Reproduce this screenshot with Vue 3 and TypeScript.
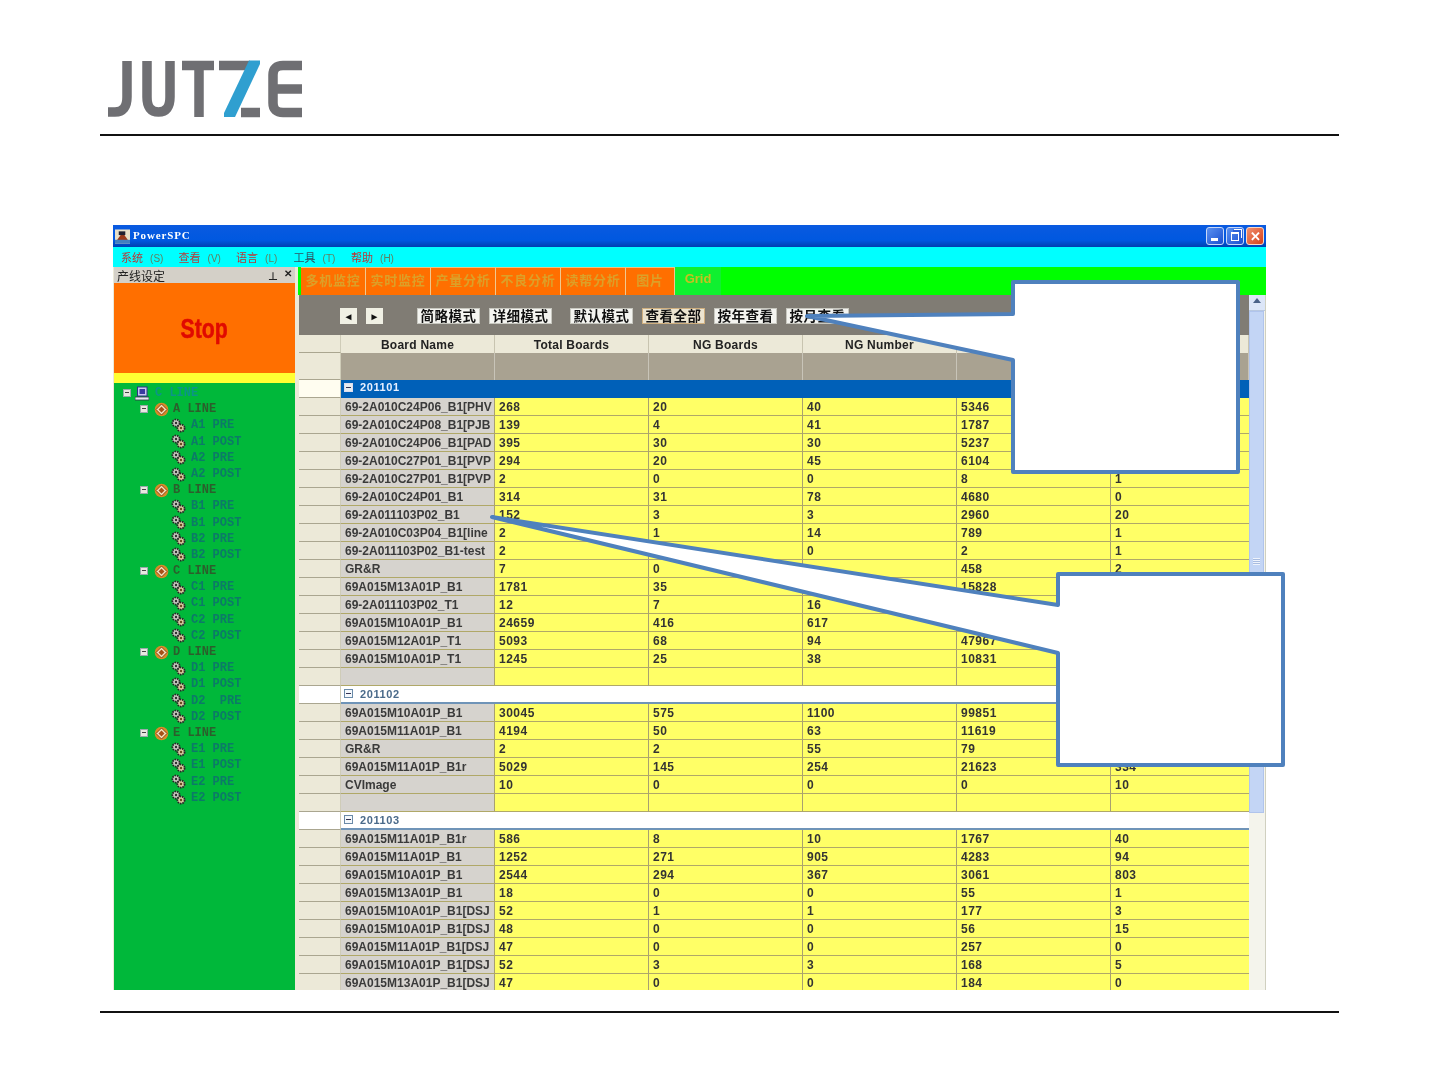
<script setup lang="ts">
interface TreeItem { label: string; level: 0 | 1 | 2 }
interface Group { name: string; open: boolean; rows: string[][] }

const menus = [
  { t: '系统', k: '(S)', c: 'red' },
  { t: '查看', k: '(V)', c: 'red' },
  { t: '语言', k: '(L)', c: 'red' },
  { t: '工具', k: '(T)', c: 'dark' },
  { t: '帮助', k: '(H)', c: 'red' },
]
const tabs = ['多机监控', '实时监控', '产量分析', '不良分析', '读帮分析', '图片']
const buttons = [
  { t: '简略模式', cls: '' },
  { t: '详细模式', cls: '' },
  { t: '默认模式', cls: 'sep' },
  { t: '查看全部', cls: 'active' },
  { t: '按年查看', cls: '' },
  { t: '按月查看', cls: '' },
]
const tree: TreeItem[] = [{ label: 'C LINE', level: 0 }]
for (const l of ['A', 'B', 'C', 'D', 'E']) {
  tree.push({ label: `${l} LINE`, level: 1 })
  tree.push({ label: `${l}1 PRE`, level: 2 })
  tree.push({ label: `${l}1 POST`, level: 2 })
  tree.push({ label: l === 'D' ? 'D2  PRE' : `${l}2 PRE`, level: 2 })
  tree.push({ label: `${l}2 POST`, level: 2 })
}
const groups: Group[] = [
  {
    name: '201101', open: true, rows: [
      ['69-2A010C24P06_B1[PHV', '268', '20', '40', '5346', ''],
      ['69-2A010C24P08_B1[PJB', '139', '4', '41', '1787', ''],
      ['69-2A010C24P06_B1[PAD', '395', '30', '30', '5237', ''],
      ['69-2A010C27P01_B1[PVP', '294', '20', '45', '6104', ''],
      ['69-2A010C27P01_B1[PVP', '2', '0', '0', '8', '1'],
      ['69-2A010C24P01_B1', '314', '31', '78', '4680', '0'],
      ['69-2A011103P02_B1', '152', '3', '3', '2960', '20'],
      ['69-2A010C03P04_B1[line', '2', '1', '14', '789', '1'],
      ['69-2A011103P02_B1-test', '2', '0', '0', '2', '1'],
      ['GR&R', '7', '0', '', '458', '2'],
      ['69A015M13A01P_B1', '1781', '35', '', '15828', ''],
      ['69-2A011103P02_T1', '12', '7', '16', '', ''],
      ['69A015M10A01P_B1', '24659', '416', '617', '', ''],
      ['69A015M12A01P_T1', '5093', '68', '94', '47967', ''],
      ['69A015M10A01P_T1', '1245', '25', '38', '10831', ''],
      ['', '', '', '', '', ''],
    ],
  },
  {
    name: '201102', open: false, rows: [
      ['69A015M10A01P_B1', '30045', '575', '1100', '99851', ''],
      ['69A015M11A01P_B1', '4194', '50', '63', '11619', ''],
      ['GR&R', '2', '2', '55', '79', ''],
      ['69A015M11A01P_B1r', '5029', '145', '254', '21623', '334'],
      ['CVImage', '10', '0', '0', '0', '10'],
      ['', '', '', '', '', ''],
    ],
  },
  {
    name: '201103', open: false, rows: [
      ['69A015M11A01P_B1r', '586', '8', '10', '1767', '40'],
      ['69A015M11A01P_B1', '1252', '271', '905', '4283', '94'],
      ['69A015M10A01P_B1', '2544', '294', '367', '3061', '803'],
      ['69A015M13A01P_B1', '18', '0', '0', '55', '1'],
      ['69A015M10A01P_B1[DSJ', '52', '1', '1', '177', '3'],
      ['69A015M10A01P_B1[DSJ', '48', '0', '0', '56', '15'],
      ['69A015M11A01P_B1[DSJ', '47', '0', '0', '257', '0'],
      ['69A015M10A01P_B1[DSJ', '52', '3', '3', '168', '5'],
      ['69A015M13A01P_B1[DSJ', '47', '0', '0', '184', '0'],
    ],
  },
]
const heads = ['Board Name', 'Total Boards', 'NG Boards', 'NG Number', '', '']
</script>

<template>
  <div class="page">
    <header class="logo-row">
      <svg class="logo" width="200" height="60" viewBox="0 0 200 60" role="img" aria-label="JUTZE">
        <g fill="none" stroke="#6f6f73" stroke-width="9.5">
          <path d="M19 2V38Q19 53 7 53H0" />
          <path d="M39 2V38Q39 53 50.500 53Q62 53 62 38V2" />
          <path d="M74 6.500H106M91 2V58" />
          <path d="M111 6.500H142M133 53.500H152" />
          <path d="M194 6.500H175Q165 6.500 165 16V44Q165 53.500 175 53.500H194M165 30H194" />
        </g>
        <path d="M141 1.500H152V5L127 58H116V54Z" fill="#2f9fd0" />
      </svg>
    </header>
    <div class="rule"></div>

    <section class="window">
      <div class="titlebar">
        <svg class="app-icon" width="15" height="15" viewBox="0 0 16 15">
          <rect width="16" height="15" fill="#e8e0c8" />
          <path d="M1 13L8 3L15 13Z" fill="#9a3a1a" />
          <path d="M4 2H11V6H4Z" fill="#202030" />
          <path d="M0 11H16V15H0Z" fill="#4080c0" />
        </svg>
        <span class="app-title">PowerSPC</span>
        <div class="win-btns">
          <span class="wbtn"><i class="min"></i></span>
          <span class="wbtn"><i class="max"></i></span>
          <span class="wbtn close">✕</span>
        </div>
      </div>
      <nav class="menubar">
        <span v-for="m in menus" :key="m.t" class="menu" :class="m.c">{{ m.t }} <em>{{ m.k }}</em></span>
      </nav>

      <div class="body">
        <aside class="side">
          <div class="side-title">
            <span>产线设定</span>
            <span class="side-tools"><b>⊥</b><b>✕</b></span>
          </div>
          <div class="stop"><span>Stop</span></div>
          <div class="stripe"></div>
          <ul class="tree">
            <li v-for="(n, i) in tree" :key="i" class="node" :class="`lv${n.level}`">
              <span v-if="n.level < 2" class="tog"></span>
              <svg v-if="n.level === 0" class="ico" width="14" height="15" viewBox="0 0 14 15">
                <rect x="2.500" y="1" width="9.500" height="9" fill="#c8c8f0" stroke="#30308a" />
                <rect x="4.500" y="3" width="5.500" height="5" fill="#3a3aa0" />
                <rect x="0" y="11" width="14" height="3" fill="#e8e8f0" stroke="#30304a" stroke-width=".8" />
              </svg>
              <svg v-else-if="n.level === 1" class="ico" width="15" height="15" viewBox="0 0 15 15">
                <circle cx="7.500" cy="7.500" r="6.800" fill="#d88a28" />
                <path d="M7.500 2L13 7.500L7.500 13L2 7.500Z" fill="#f4e4c0" stroke="#8a4414" />
                <path d="M7.500 4.500L10.500 7.500L7.500 10.500L4.500 7.500Z" fill="#a85018" />
              </svg>
              <svg v-else class="ico" width="15" height="15" viewBox="0 0 15 15">
                <circle cx="5" cy="5" r="3.600" fill="#c8c8c0" stroke="#282828" stroke-width="1.800" stroke-dasharray="1.600 .9" />
                <circle cx="10" cy="10" r="3.600" fill="#d8c8a0" stroke="#282828" stroke-width="1.800" stroke-dasharray="1.600 .9" />
                <circle cx="5" cy="5" r="1.200" fill="#303030" />
                <circle cx="10" cy="10" r="1.200" fill="#6a4a20" />
              </svg>
              <span class="lab">{{ n.label }}</span>
            </li>
          </ul>
        </aside>

        <main class="main">
          <div class="tabs">
            <span v-for="t in tabs" :key="t" class="tab" :class="{ narrow: t === '图片' }">{{ t }}</span>
            <span class="tab grid">Grid</span>
          </div>
          <div class="content">
            <div class="grid-area">
              <div class="toolbar">
                <span class="arrow">◄</span>
                <span class="arrow">►</span>
                <span class="tbtns">
                  <span v-for="b in buttons" :key="b.t" class="tbtn" :class="b.cls">{{ b.t }}</span>
                </span>
              </div>
              <div class="row head">
                <span class="rh"></span>
                <span v-for="(h, i) in heads" :key="i" class="hc">{{ h }}</span>
              </div>
              <div class="row filter">
                <span class="rh"></span>
                <span v-for="i in 6" :key="i" class="fc"></span>
              </div>
              <template v-for="g in groups" :key="g.name">
                <div class="row group" :class="{ open: g.open }">
                  <span class="rh"></span>
                  <span class="gname"><i class="box"></i>{{ g.name }}</span>
                </div>
                <div v-for="(r, ri) in g.rows" :key="ri" class="row data">
                  <span class="rh"></span>
                  <span v-for="(c, ci) in r" :key="ci" class="cell" :class="{ name: ci === 0 }">{{ c }}</span>
                </div>
              </template>
            </div>
            <div class="scrollbar">
              <span class="up"><i></i></span>
              <span class="thumb"><i></i></span>
            </div>
          </div>
        </main>
      </div>
    </section>

    <div class="rule bottom"></div>

    <svg class="callouts" width="1440" height="1080" viewBox="0 0 1440 1080" aria-hidden="true">
      <path d="M1013 282H1238V472H1013V360L807 316L1013 314Z" fill="#fff" stroke="#4f81bd" stroke-width="4" stroke-linejoin="round" />
      <path d="M1058 574H1283V765H1058V653L492 517L1058 605Z" fill="#fff" stroke="#4f81bd" stroke-width="4" stroke-linejoin="round" />
    </svg>
  </div>
</template>

<style>
html, body { margin: 0; background: #fff; }
</style>

<style scoped>
.page {
  position: relative;
  width: 1440px;
  height: 1080px;
  padding: 0 101px 0 100px;
  box-sizing: border-box;
  overflow: hidden;
  background: #fff;
  font-family: "Liberation Sans", "Noto Sans CJK SC", sans-serif;
}
.logo-row { height: 134px; padding: 59px 0 0 8px; box-sizing: border-box; }
.logo { display: block; filter: blur(.6px); }
.rule { height: 2px; background: #111; }
.rule.bottom { margin-top: 21px; }

.window {
  margin: 89px 0 0 13px;
  width: 1153px;
  height: 765px;
  display: flex;
  flex-direction: column;
  overflow: hidden;
  background: #ece9d8;
  filter: blur(.45px);
}
.titlebar {
  height: 22px;
  flex: none;
  display: flex;
  align-items: center;
  padding: 0 2px;
  background: linear-gradient(#0a5ae0, #0058e0 70%, #0040b0);
  color: #fff;
}
.app-title { margin-left: 3px; padding-bottom: 2px; font: bold 11px "Liberation Serif", serif; letter-spacing: .85px; }
.win-btns { margin-left: auto; display: flex; gap: 2px; }
.wbtn {
  width: 18px; height: 18px; box-sizing: border-box;
  display: flex; align-items: center; justify-content: center;
  border: 1px solid #c8d8f8; border-radius: 3px;
  background: linear-gradient(135deg, #5a90f0, #1a50d0);
  position: relative;
}
.wbtn .min { position: absolute; left: 4px; bottom: 3px; width: 7px; height: 3px; background: #fff; }
.wbtn .max { width: 6px; height: 6px; border: 1px solid #fff; border-top-width: 2px; box-shadow: 2px -2px 0 0 #2a60d8, 3px -3px 0 0 #fff; }
.wbtn.close { background: linear-gradient(135deg, #f09070, #d84018); color: #fff; font-size: 13px; font-weight: bold; border-color: #f8d8c8; }

.menubar {
  height: 20px; flex: none;
  display: flex; align-items: center;
  padding-left: 8px;
  background: #00ffff;
  font-size: 11px;
}
.menu { width: 57.500px; white-space: nowrap; }
.menu em { font-style: normal; color: #608060; font-size: 10px; margin-left: 4px; }
.menu.red { color: #b83838; }
.menu.dark { color: #305060; }

.body { flex: 1; min-height: 0; display: flex; }
.side { width: 181px; margin-left: 1px; flex: none; display: flex; flex-direction: column; }
.side-title {
  height: 16px; flex: none;
  display: flex; justify-content: space-between; align-items: center;
  padding: 0 3px;
  background: #d4d0c8;
  font-size: 12px; color: #222;
}
.side-tools { display: flex; gap: 6px; font-size: 10px; }
.stop {
  height: 90px; flex: none;
  display: flex; align-items: center; justify-content: center;
  padding-top: 2px;
  box-sizing: border-box;
  background: #ff6f00;
}
.stop span {
  display: inline-block;
  color: #e00a00;
  font: bold 28px "Liberation Sans", sans-serif;
  transform: scaleX(.76);
  -webkit-text-stroke: .5px #e00a00;
}
.stripe { height: 10px; flex: none; background: #ffff33; }
.tree {
  flex: 1; margin: 0; padding: 2px 0 0; list-style: none;
  background: #00b83a;
  font: bold 12px/16.200px "Liberation Mono", monospace;
}
.node { height: 16.200px; display: flex; align-items: center; color: #0c7a68; white-space: pre; }
.node.lv0 { padding-left: 9px; color: #0c9488; }
.node.lv1 { padding-left: 26px; color: #2c5e2c; }
.node.lv2 { padding-left: 56.500px; }
.tog { width: 8px; height: 8px; box-sizing: border-box; flex: none; background: #e8e8e0; border: 1px solid #9aa; position: relative; }
.lv0 .tog { margin-right: 4px; }
.lv1 .tog { margin-right: 6px; }
.tog::after { content: ""; position: absolute; left: 1px; right: 1px; top: 2px; height: 1px; background: #444; }
.ico { flex: none; }
.lv0 .ico { margin-right: 6px; }
.lv1 .ico { margin-right: 4px; }
.lv2 .ico { margin-right: 5.500px; }

.main { flex: 1; min-width: 0; display: flex; flex-direction: column; margin-left: 4px; }
.tabs {
  height: 28px; flex: none;
  display: flex; align-items: stretch;
  margin-left: -1px;
  padding-left: 3px;
  background: #00ff00;
}
.tab {
  width: 65px; box-sizing: border-box;
  display: flex; align-items: center; justify-content: center;
  padding-bottom: 4px;
  background: #ff6f00;
  color: #dca028;
  font-size: 13px; font-weight: bold; letter-spacing: .7px;
  border-top: 1px solid #f0c080;
  border-right: 1px solid #f0c890;
}
.tab.narrow { width: 49px; }
.tab.grid { width: 46px; background: #10f030; color: #c8c020; font-size: 13px; border: 0; padding-bottom: 6px; letter-spacing: 0; }

.content { flex: 1; min-height: 0; display: flex; }
.grid-area { width: 950px; flex: none; display: flex; flex-direction: column; overflow: hidden; background: #807c74; }
.toolbar { height: 40px; flex: none; display: flex; align-items: center; padding: 2px 0 0 41px; box-sizing: border-box; background: #807c74; }
.arrow {
  width: 17px; height: 16px; margin-right: 9px;
  display: flex; align-items: center; justify-content: center;
  background: #f0f0e4; color: #111; font-size: 10px;
}
.tbtns { display: flex; gap: 9px; margin-left: 25px; }
.tbtn {
  width: 63px; height: 16px; box-sizing: border-box;
  display: flex; align-items: center; justify-content: center;
  padding-bottom: 2px;
  background: #f4f4f0;
  border: 1px solid #c8c8c0;
  color: #111;
  font: bold 13.500px "Noto Sans CJK SC", sans-serif;
  letter-spacing: .5px;
  white-space: nowrap;
}
.tbtn.sep { margin-left: 9px; }
.tbtn.active { border-color: #d0b080; background: #ece4d0; }

.row { display: grid; grid-template-columns: 42px 154px 154px 154px 154px 154px 138px; height: 18px; flex: none; background: #ece9d8; }
.rh { background: #ece9d8; border-bottom: 1px solid #aaa690; border-right: 1px solid #cfccb8; box-sizing: border-box; }
.hc {
  display: flex; align-items: center; justify-content: center;
  padding: 1px 0 0 0;
  border-right: 1px solid #c8c4b0;
  box-sizing: border-box;
  font-size: 12px; font-weight: bold; letter-spacing: .25px; color: #222;
}
.row.filter { height: 27px; }
.fc { background: #a9a291; border-right: 1px solid #c8c4b8; box-sizing: border-box; }
.row.group { background: #fff; }
.row.group .rh { background: #fff; }
.gname {
  grid-column: 2 / 8;
  display: flex; align-items: center; gap: 7px;
  padding: 0 0 1px 3px;
  box-sizing: border-box;
  background: #fff;
  border-bottom: 2px solid #6f94b8;
  color: #4a6a8a;
  font-size: 11px; font-weight: bold; letter-spacing: .6px;
}
.box { width: 9px; height: 9px; box-sizing: border-box; border: 1px solid #6a8aa8; position: relative; background: #f4f8fc; }
.box::after { content: ""; position: absolute; left: 1px; right: 1px; top: 3px; height: 1px; background: #335; }
.row.group.open .rh { background: #fffdf0; }
.row.group.open .gname { background: #0060b8; color: #e8f0ff; border-bottom: 0; padding-bottom: 4px; }
.row.group.open .box { background: #e8ecf0; border-color: #dde; }

.cell {
  display: block;
  padding-left: 4px;
  box-sizing: border-box;
  background: #ffff66;
  border-right: 1px solid #a8a070;
  border-bottom: 1px solid #b0a868;
  overflow: hidden;
  white-space: nowrap;
  font-size: 12px; font-weight: bold; line-height: 19px; letter-spacing: .5px;
  color: #333;
}
.cell.name { background: #d6d3ce; color: #3a3a3a; letter-spacing: 0; }
.cell:last-child { border-right: 0; }

.scrollbar { flex: 1; position: relative; background: #f4f4ec; border-right: 1px solid #d0d0c0; box-sizing: border-box; }
.scrollbar .up { display: block; height: 15px; background: #dce6f8; border-bottom: 1px solid #b8c8e0; position: relative; }
.scrollbar .up i { position: absolute; left: 4px; top: 3px; border: 4px solid transparent; border-top: 0; border-bottom: 5px solid #4a6288; }
.scrollbar .thumb { display: block; height: 502px; margin-right: 1px; background: #c3d5f5; border: 1px solid #b0c4ec; box-sizing: border-box; position: relative; }
.scrollbar .thumb i { position: absolute; left: 3px; right: 3px; top: 246px; height: 7px; background: repeating-linear-gradient(#eef3fc 0 1px, #a8bce0 1px 2px); }

.callouts { position: absolute; left: 0; top: 0; pointer-events: none; }
</style>
